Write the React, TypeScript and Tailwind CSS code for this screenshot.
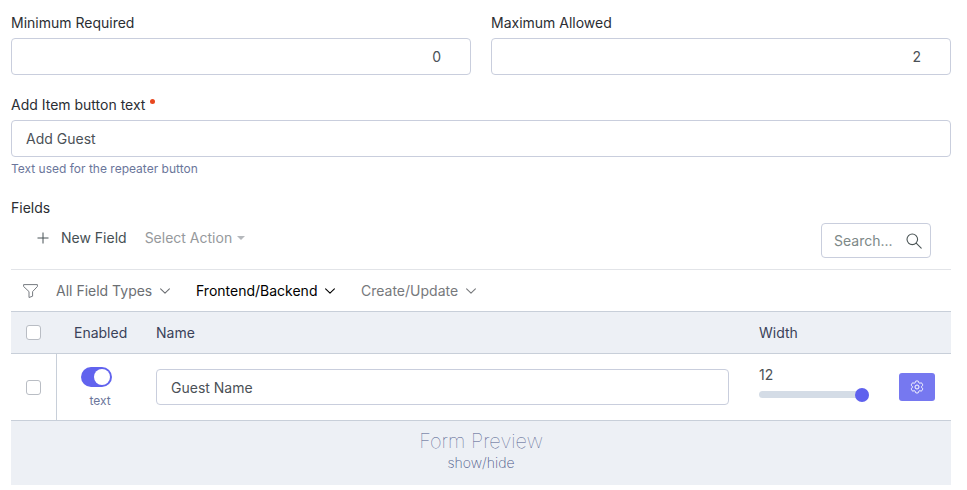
import { useState } from "react";
import type { ReactNode } from "react";

const inputClass =
  "w-full rounded border border-[#c9cedd] bg-white text-[#4b5157] outline-none focus:border-[#6366f1]";

function NumberField({ id, label, value }: { id: string; label: string; value: number }) {
  return (
    <div>
      <label htmlFor={id} className="mb-[5px] block">
        {label}
      </label>
      <input
        id={id}
        type="number"
        defaultValue={value}
        className={`${inputClass} h-[37px] pr-[29px] pl-[14px] text-right [appearance:textfield] [&::-webkit-inner-spin-button]:appearance-none`}
      />
    </div>
  );
}

function Chevron() {
  return (
    <svg viewBox="0 0 10 6" className="h-[6px] w-[10px]" fill="none" stroke="currentColor" strokeWidth="1.1">
      <path d="M0.6 0.8 5 5.1 9.4 0.8" strokeLinecap="round" strokeLinejoin="round" />
    </svg>
  );
}

function Dropdown({
  label,
  width,
  color,
  icon,
}: {
  label: string;
  width: string;
  color: string;
  icon: ReactNode;
}) {
  return (
    <div className={`grid items-center ${width} ${color}`}>
      <select
        aria-label={label}
        className="col-start-1 row-start-1 h-5 w-full cursor-pointer appearance-none bg-transparent outline-none"
      >
        <option>{label}</option>
      </select>
      <span className="pointer-events-none col-start-1 row-start-1 justify-self-end">{icon}</span>
    </div>
  );
}

const checkboxClass =
  "block size-[15px] appearance-none rounded-[3px] border border-[#b9bdc4] bg-white checked:border-[#6366f1] checked:bg-[#6366f1]";

export default function App() {
  const [enabled, setEnabled] = useState(true);
  const [width, setWidth] = useState(12);

  return (
    <main className="bg-white pt-[13px] pr-4 pb-[5px] pl-[11px] font-['Inter',sans-serif] text-sm text-[#2b2e33]">
      <div className="grid grid-cols-2 gap-5">
        <NumberField id="minimum" label="Minimum Required" value={0} />
        <NumberField id="maximum" label="Maximum Allowed" value={2} />
      </div>

      <div className="mt-5">
        <label htmlFor="button-text" className="mb-[5px] flex">
          Add Item button text
          <span className="mt-1 ml-[5px] size-[5px] rounded-full bg-[#e8471f]" />
        </label>
        <input id="button-text" defaultValue="Add Guest" className={`${inputClass} block h-[37px] px-[14px]`} />
        <p className="mt-1 text-xs text-[#6b769b]">Text used for the repeater button</p>
      </div>

      <h2 className="mt-[21px]">Fields</h2>

      <div className="flex items-start border-b border-[#e2e4e8] px-5 pt-[5px] pb-[11px]">
        <button type="button" className="ml-[6px] flex h-[30px] items-center gap-3 text-[#465054]">
          <svg viewBox="0 0 12 12" className="size-3" stroke="currentColor" strokeWidth="1">
            <path d="M6 0.5v11M0.5 6h11" />
          </svg>
          New Field
        </button>
        <div className="ml-[18px] flex h-[30px] items-center">
          <Dropdown
            label="Select Action"
            width="w-[100px]"
            color="text-[#96999c]"
            icon={
              <svg viewBox="0 0 8 4" className="h-1 w-2" fill="#b5b8bc">
                <path d="M0 0h8L4 4z" />
              </svg>
            }
          />
        </div>
        <div className="ml-auto flex h-[35px] w-[110px] items-center rounded border border-[#c9cedd] pr-2 pl-3">
          <input
            type="search"
            aria-label="Search"
            placeholder="Search..."
            className="w-full min-w-0 bg-transparent outline-none placeholder:text-[#7d8887]"
          />
          <svg viewBox="0 0 16 16" className="size-4 shrink-0" fill="none" stroke="#4b5556" strokeWidth="1.1">
            <circle cx="6.3" cy="6.3" r="5.3" />
            <path d="m10.2 10.2 5 5" strokeLinecap="round" />
          </svg>
        </div>
      </div>

      <div className="flex h-[41px] items-center pl-3">
        <svg
          viewBox="0 0 15 14"
          className="mr-[18px] h-[14px] w-[15px]"
          fill="none"
          stroke="#777b80"
          strokeLinejoin="round"
        >
          <path d="M0.6 0.6h13.8v1.9L9.6 7.6v4.6L6 13.5V7.6L0.6 2.5z" />
        </svg>
        <div className="flex gap-[26px]">
          <Dropdown label="All Field Types" width="w-[114px]" color="text-[#6c6f73]" icon={<Chevron />} />
          <Dropdown label="Frontend/Backend" width="w-[139px]" color="text-black" icon={<Chevron />} />
          <Dropdown label="Create/Update" width="w-[115px]" color="text-[#77797c]" icon={<Chevron />} />
        </div>
      </div>

      <table className="w-full table-fixed border-collapse text-left">
        <colgroup>
          <col className="w-[45px]" />
          <col className="w-[85px]" />
          <col />
          <col className="w-[140px]" />
          <col className="w-[67px]" />
        </colgroup>
        <thead>
          <tr className="h-[42px] border-y border-[#c8cfd9] bg-[#edf0f5] text-[#3a4259]">
            <th className="pl-[15px]">
              <input type="checkbox" aria-label="Select all fields" className={checkboxClass} />
            </th>
            <th className="pl-[18px] font-normal">Enabled</th>
            <th className="px-[15px] font-normal">Name</th>
            <th className="px-[15px] font-normal">Width</th>
            <th aria-label="Settings" />
          </tr>
        </thead>
        <tbody>
          <tr className="h-[67px] border-b border-[#c8cfd9]">
            <td className="border-r border-[#c8cfd9] pl-[15px]">
              <input type="checkbox" aria-label="Select Guest Name" className={checkboxClass} />
            </td>
            <td className="pt-[2px] pl-6">
              <input
                type="checkbox"
                role="switch"
                aria-label="Enabled"
                checked={enabled}
                onChange={(e) => setEnabled(e.target.checked)}
                className="flex h-5 w-[31px] cursor-pointer appearance-none items-center rounded-full bg-[#c9cedd] px-[2px] before:size-4 before:rounded-full before:bg-white checked:justify-end checked:bg-[#6163ee]"
              />
              <div className="mt-[6px] pl-[9px] text-xs text-[#6b769b]">text</div>
            </td>
            <td className="px-[15px]">
              <input aria-label="Name" defaultValue="Guest Name" className={`${inputClass} block h-9 px-[14px]`} />
            </td>
            <td className="px-[15px] pb-2">
              <label htmlFor="width" className="block text-[#4b5157]">
                {width}
              </label>
              <input
                id="width"
                type="range"
                min={1}
                max={12}
                value={width}
                onChange={(e) => setWidth(Number(e.target.value))}
                className="mt-[3px] block h-[14px] w-full cursor-pointer appearance-none bg-transparent [&::-webkit-slider-runnable-track]:h-[7px] [&::-webkit-slider-runnable-track]:rounded-full [&::-webkit-slider-runnable-track]:bg-[#d4dce6] [&::-webkit-slider-thumb]:-mt-[3px] [&::-webkit-slider-thumb]:size-[14px] [&::-webkit-slider-thumb]:appearance-none [&::-webkit-slider-thumb]:rounded-full [&::-webkit-slider-thumb]:bg-[#5f61ee]"
              />
            </td>
            <td className="pl-[15px]">
              <button
                type="button"
                aria-label="Field settings"
                className="flex h-7 w-9 items-center justify-center rounded-[3px] bg-[#7678f0] text-white"
              >
                <svg
                  viewBox="0 0 24 24"
                  className="size-4"
                  fill="none"
                  stroke="currentColor"
                  strokeWidth="1.5"
                  strokeLinejoin="round"
                >
                  <path d="M9.6 3.9c.1-.5.6-.9 1.1-.9h2.6c.6 0 1 .4 1.1.9l.2 1.3c.1.4.3.7.6.9l.3.1c.3.2.7.2 1.1.1l1.2-.5c.5-.2 1.1 0 1.4.5l1.3 2.2c.3.5.2 1.1-.3 1.4l-1 .9c-.3.2-.4.6-.4 1v.3c0 .4.1.8.4 1l1 .8c.4.4.5 1 .3 1.5l-1.3 2.2c-.3.5-.9.7-1.4.5l-1.2-.5c-.4-.1-.8-.1-1.1.1l-.3.1c-.3.2-.5.5-.6.9l-.2 1.3c-.1.5-.5.9-1.1.9h-2.6c-.5 0-1-.4-1.1-.9l-.2-1.3c-.1-.4-.3-.7-.6-.9l-.3-.1c-.3-.2-.7-.2-1.1-.1l-1.2.5c-.5.2-1.1 0-1.4-.5l-1.3-2.2c-.2-.5-.1-1.1.3-1.5l1-.8c.3-.2.4-.6.4-1v-.3c0-.4-.1-.8-.4-1l-1-.9c-.4-.3-.5-.9-.3-1.4l1.3-2.2c.3-.5.9-.7 1.4-.5l1.2.5c.4.1.8.1 1.1-.1l.3-.1c.3-.2.5-.5.6-.9z" />
                  <circle cx="12" cy="12" r="3" />
                </svg>
              </button>
            </td>
          </tr>
        </tbody>
      </table>

      <button
        type="button"
        className="block w-full cursor-pointer bg-[#edf0f5] pt-2 pb-3 text-center text-[#4d5a8a]"
      >
        <span className="block text-xl leading-6 font-thin">Form Preview</span>
        <span className="block font-extralight">show/hide</span>
      </button>
    </main>
  );
}
